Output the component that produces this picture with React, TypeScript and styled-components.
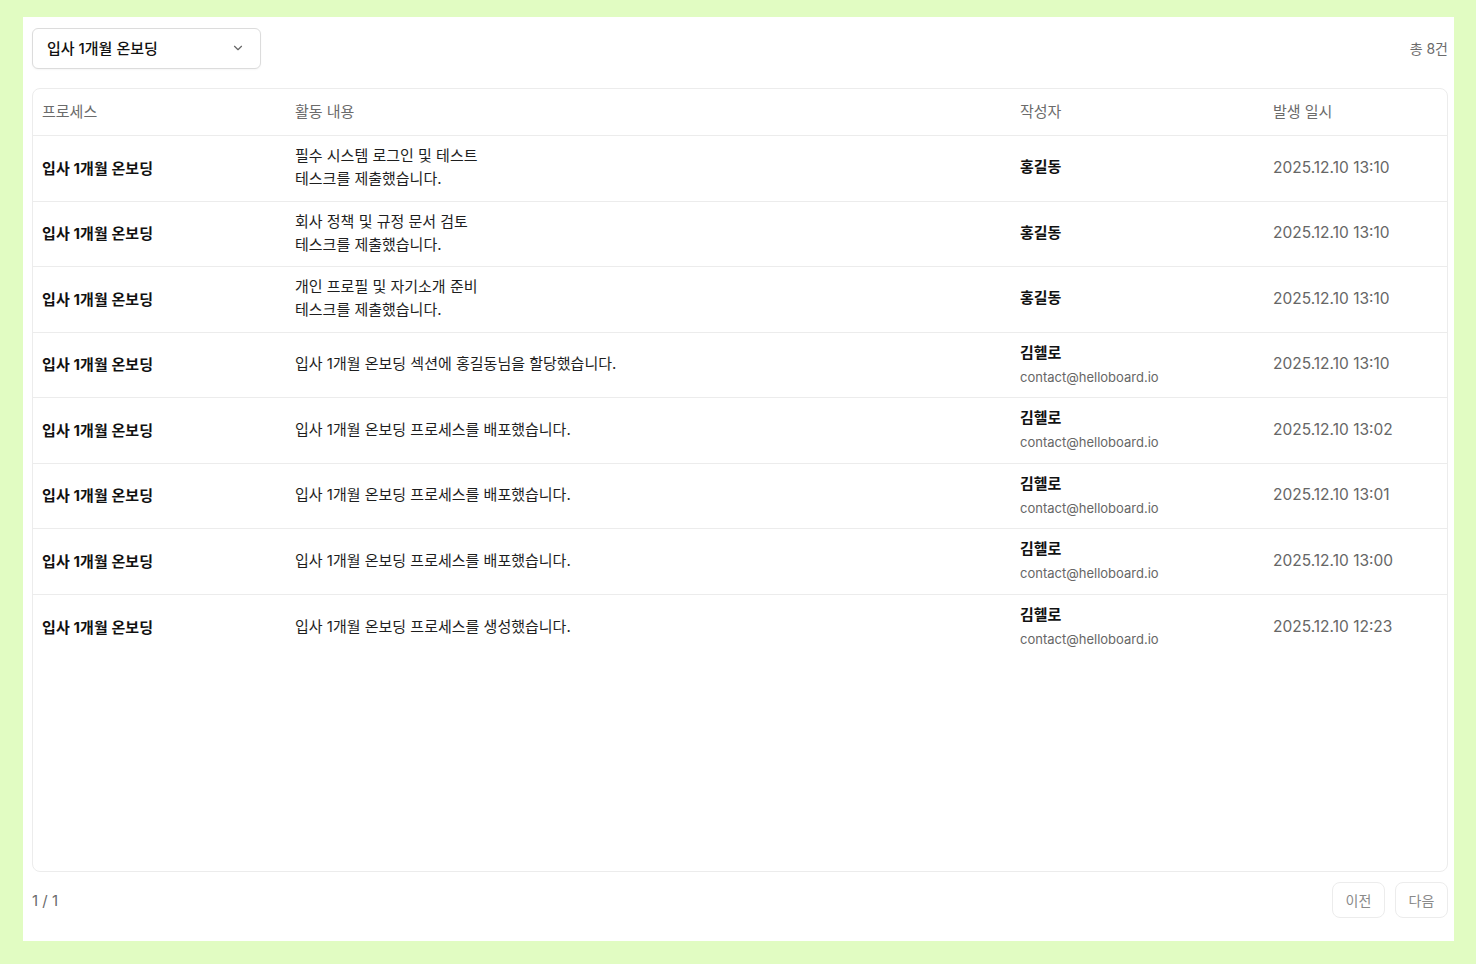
import React from "react";
import styled, { createGlobalStyle } from "styled-components";

const Global = createGlobalStyle`
  html, body { margin: 0; padding: 0; }
  body {
    background: #e1fcc2;
    font-family: Inter, "Noto Sans CJK KR", "Noto Sans", sans-serif;
    color: #111;
    -webkit-font-smoothing: antialiased;
  }
`;

const Page = styled.div`
  padding: 17px 22px 23px 23px;
`;

const Panel = styled.div`
  background: #fff;
  height: 924px;
  box-sizing: border-box;
  padding: 11px 6px 23px 9px;
  display: flex;
  flex-direction: column;
`;

const TopBar = styled.div`
  display: flex;
  align-items: center;
  justify-content: space-between;
  margin-bottom: 19px;
`;

const Select = styled.button`
  width: 229px;
  height: 41px;
  box-sizing: border-box;
  border: 1px solid #dcdcdc;
  border-radius: 6px;
  background: #fff;
  display: flex;
  align-items: center;
  justify-content: space-between;
  padding: 0 15px 2px 14px;
  font-family: inherit;
  font-size: 15px;
  font-weight: 500;
  color: #111;
  box-shadow: 0 1px 2px rgba(0, 0, 0, 0.04);
`;

const Total = styled.span`
  font-size: 14px;
  color: #6b6b6b;
  margin-bottom: 2px;
`;

const Card = styled.div`
  flex: 1;
  border: 1px solid #ececec;
  border-radius: 8px;
  overflow: hidden;
`;

const Row = styled.div<{ $head?: boolean }>`
  display: grid;
  grid-template-columns: 253px 725px 253px 1fr;
  align-items: center;
  height: ${(p) => (p.$head ? "47px" : "65.5px")};
  box-sizing: border-box;
  border-bottom: 1px solid #ececec;
  padding-left: 9px;
  padding-bottom: ${(p) => (p.$head ? "3px" : "2px")};

  &:last-child {
    border-bottom: none;
  }
`;

const HeadCell = styled.div`
  font-size: 15px;
  color: #6b6b6b;
`;

const ProcessCell = styled.div`
  font-size: 15px;
  font-weight: 700;
  color: #111;
  letter-spacing: 0.1px;
`;

const ActivityCell = styled.div`
  font-size: 15px;
  line-height: 23px;
  color: #1e1e1e;
  white-space: pre-line;
`;

const AuthorCell = styled.div`
  display: flex;
  flex-direction: column;
  gap: 4px;
`;

const AuthorName = styled.div`
  font-size: 15px;
  font-weight: 700;
  color: #111;
  line-height: 22px;
`;

const AuthorEmail = styled.div`
  font-size: 13px;
  color: #666;
  line-height: 18px;
`;

const DateCell = styled.div`
  font-size: 15.5px;
  color: #666;
`;

const Footer = styled.div`
  display: flex;
  align-items: center;
  justify-content: space-between;
  margin-top: 10px;
`;

const PageInfo = styled.span`
  font-size: 15px;
  color: #6b6b6b;
`;

const Buttons = styled.div`
  display: flex;
  gap: 10px;
`;

const PageButton = styled.button`
  width: 53px;
  height: 36px;
  box-sizing: border-box;
  border: 1px solid #ececec;
  border-radius: 8px;
  background: #fff;
  font-family: inherit;
  font-size: 14px;
  color: #8a8a8a;
`;

type Item = {
  activity: string;
  name: string;
  email?: string;
  date: string;
};

const items: Item[] = [
  { activity: "필수 시스템 로그인 및 테스트\n테스크를 제출했습니다.", name: "홍길동", date: "2025.12.10 13:10" },
  { activity: "회사 정책 및 규정 문서 검토\n테스크를 제출했습니다.", name: "홍길동", date: "2025.12.10 13:10" },
  { activity: "개인 프로필 및 자기소개 준비\n테스크를 제출했습니다.", name: "홍길동", date: "2025.12.10 13:10" },
  { activity: "입사 1개월 온보딩 섹션에 홍길동님을 할당했습니다.", name: "김헬로", email: "contact@helloboard.io", date: "2025.12.10 13:10" },
  { activity: "입사 1개월 온보딩 프로세스를 배포했습니다.", name: "김헬로", email: "contact@helloboard.io", date: "2025.12.10 13:02" },
  { activity: "입사 1개월 온보딩 프로세스를 배포했습니다.", name: "김헬로", email: "contact@helloboard.io", date: "2025.12.10 13:01" },
  { activity: "입사 1개월 온보딩 프로세스를 배포했습니다.", name: "김헬로", email: "contact@helloboard.io", date: "2025.12.10 13:00" },
  { activity: "입사 1개월 온보딩 프로세스를 생성했습니다.", name: "김헬로", email: "contact@helloboard.io", date: "2025.12.10 12:23" },
];

const Chevron = () => (
  <svg width="14" height="14" viewBox="0 0 24 24" fill="none" stroke="#666" strokeWidth="2" strokeLinecap="round" strokeLinejoin="round">
    <path d="M6 9l6 6 6-6" />
  </svg>
);

export default function App() {
  return (
    <Page>
      <Global />
      <Panel>
        <TopBar>
          <Select>
            <span>입사 1개월 온보딩</span>
            <Chevron />
          </Select>
          <Total>총 8건</Total>
        </TopBar>
        <Card>
          <Row $head>
            <HeadCell>프로세스</HeadCell>
            <HeadCell>활동 내용</HeadCell>
            <HeadCell>작성자</HeadCell>
            <HeadCell>발생 일시</HeadCell>
          </Row>
          {items.map((it, i) => (
            <Row key={i}>
              <ProcessCell>입사 1개월 온보딩</ProcessCell>
              <ActivityCell>{it.activity}</ActivityCell>
              <AuthorCell>
                <AuthorName>{it.name}</AuthorName>
                {it.email && <AuthorEmail>{it.email}</AuthorEmail>}
              </AuthorCell>
              <DateCell>{it.date}</DateCell>
            </Row>
          ))}
        </Card>
        <Footer>
          <PageInfo>1 / 1</PageInfo>
          <Buttons>
            <PageButton>이전</PageButton>
            <PageButton>다음</PageButton>
          </Buttons>
        </Footer>
      </Panel>
    </Page>
  );
}
